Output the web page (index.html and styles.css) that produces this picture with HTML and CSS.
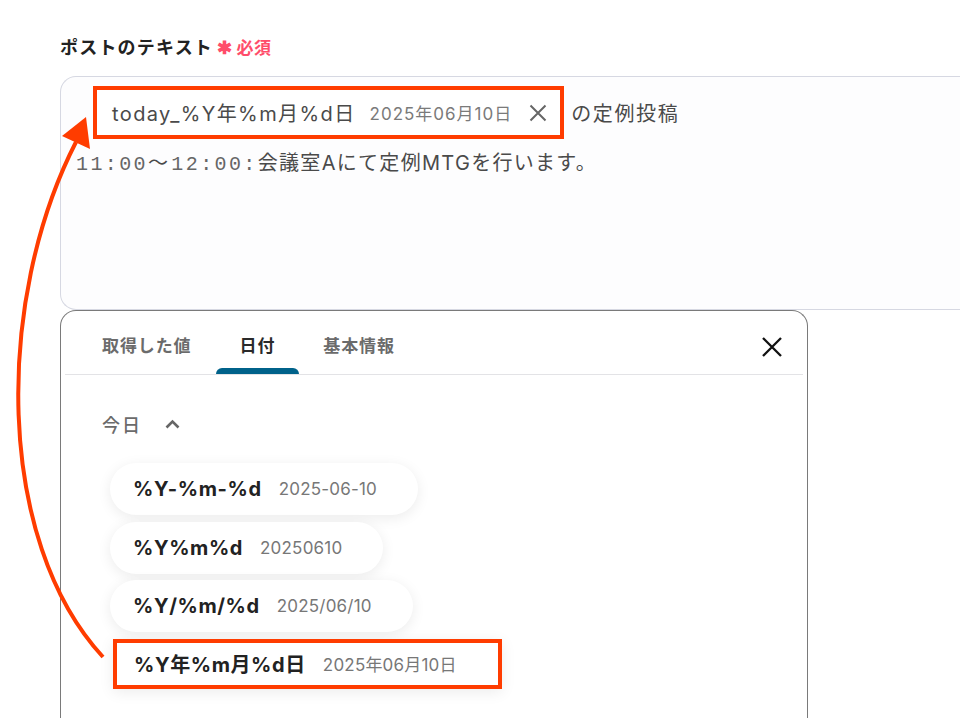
FILE: index.html
```html
<!DOCTYPE html>
<html lang="ja">
<head>
<meta charset="utf-8">
<link rel="stylesheet" href="styles.css">
</head>
<body>
<div class="page">
  <div class="label">ポストのテキスト<span class="req"><span class="ast">✱</span>必須</span></div>
  <div class="field">
    <div class="line1">
      <span class="chip">
        <span class="chip-key">today_%Y年%m月%d日</span>
        <span class="chip-val">2025年06月10日</span>
        <svg class="chip-x" width="18" height="18" viewBox="0 0 18 18"><path d="M1.5 1.5 L16.5 16.5 M16.5 1.5 L1.5 16.5" stroke="#666" stroke-width="2" fill="none"/></svg>
      </span>
      <span class="after">の定例投稿</span>
    </div>
    <div class="line2"><span class="mono">11:00</span><span class="wave">〜</span><span class="mono">12:00:</span>会議室Aにて定例MTGを行います。</div>
  </div>
  <div class="popup">
    <div class="tabs">
      <div class="tab">取得した値</div>
      <div class="tab active">日付</div>
      <div class="tab">基本情報</div>
      <svg class="close" width="22" height="22" viewBox="0 0 22 22"><path d="M2 2 L20 20 M20 2 L2 20" stroke="#111" stroke-width="2.3" fill="none"/></svg>
    </div>
    <div class="section-head">今日<svg class="chev" width="15" height="10" viewBox="0 0 15 10"><path d="M1.5 8.5 L7.5 2.5 L13.5 8.5" stroke="#666" stroke-width="2.6" fill="none"/></svg></div>
    <div class="items">
      <div class="item"><span class="key">%Y-%m-%d</span><span class="val">2025-06-10</span></div>
      <div class="item"><span class="key">%Y%m%d</span><span class="val">20250610</span></div>
      <div class="item"><span class="key">%Y/%m/%d</span><span class="val">2025/06/10</span></div>
      <div class="item marked"><span class="key">%Y年%m月%d日</span><span class="val">2025年06月10日</span></div>
    </div>
  </div>
  <svg class="arrow" width="960" height="718" viewBox="0 0 960 718">
    <path d="M103 657 C -5 540 -5 300 76 142" stroke="#ff3c00" stroke-width="4" fill="none"/>
    <polygon points="86,117 62,136 90,149" fill="#ff3c00"/>
  </svg>
</div>
</body>
</html>
```
FILE: styles.css
```css
* { box-sizing: border-box; }
html, body { margin: 0; padding: 0; }
body {
  width: 960px;
  height: 718px;
  overflow: hidden;
  background: #ffffff;
  font-family: "Inter", "Noto Sans CJK JP", sans-serif;
  color: #333;
}
.page {
  position: relative;
  height: 718px;
  padding: 36px 0 0 60px;
}
.label {
  font-size: 18px;
  line-height: 24px;
  font-weight: 700;
  color: #222;
  letter-spacing: 1.2px;
  display: flex;
  align-items: center;
}
.req {
  color: #ff4d6a;
  font-size: 17px;
  font-weight: 700;
  margin-left: 4px;
  display: flex;
  align-items: center;
  letter-spacing: 0.5px;
}
.ast { font-size: 18px; margin-right: 4px; }
.field {
  margin-top: 16px;
  width: 930px;
  height: 234px;
  border: 1px solid #d6d8e2;
  border-right: none;
  border-radius: 16px 0 0 16px;
  background: #fdfdfe;
  padding: 9px 0 0 15px;
}
.line1 { display: flex; align-items: center; }
.chip {
  display: inline-flex;
  align-items: center;
  height: 53px;
  margin-left: 17px;
  border: 4px solid #ff3c00;
  background: #fff;
  padding: 0 13px 0 15px;
}
.chip-key {
  font-size: 20px;
  letter-spacing: 1.4px;
  color: #4a4a4a;
}
.chip-val {
  font-size: 17px;
  color: #7a7a7a;
  margin-left: 14px;
  letter-spacing: 1px;
}
.chip-x { margin-left: 17px; }
.after {
  margin-left: 7px;
  font-size: 20px;
  letter-spacing: 1.6px;
  color: #4a4a4a;
}
.line2 {
  margin-top: 10px;
  font-size: 20px;
  line-height: 28px;
  letter-spacing: 1.3px;
  color: #4a4a4a;
}
.mono {
  font-family: "Liberation Mono", monospace;
  font-weight: 400;
  letter-spacing: 2.4px;
  color: #666;
}
.wave { margin-right: 2px; }
.popup {
  width: 748px;
  height: 420px;
  border: 1px solid #7a7a7a;
  border-bottom: none;
  border-radius: 16px 16px 0 0;
  background: #fff;
}
.tabs {
  display: flex;
  align-items: stretch;
  height: 64px;
  margin: 0 4px;
  padding-left: 13px;
  border-bottom: 1px solid #e3e3e6;
}
.tab {
  position: relative;
  display: flex;
  align-items: center;
  padding: 3px 24px 0;
  font-size: 17px;
  font-weight: 700;
  letter-spacing: 0.9px;
  color: #6b6b6b;
}
.tab.active { color: #2a2a2a; }
.tab.active::after {
  content: "";
  position: absolute;
  left: 0;
  right: 0;
  bottom: 0;
  height: 6px;
  border-radius: 6px 6px 0 0;
  background: #00628a;
}
.close { margin: 25px 20px 0 auto; }
.section-head {
  display: flex;
  align-items: center;
  padding: 39px 0 0 41px;
  height: 63px;
  font-size: 18px;
  line-height: 24px;
  font-weight: 500;
  letter-spacing: 2px;
  color: #6b6b6b;
}
.chev { margin-left: 23px; margin-top: -4px; }
.items {
  display: flex;
  flex-direction: column;
  align-items: flex-start;
  gap: 6.5px;
  margin-top: 25px;
  padding-left: 49px;
}
.item {
  display: inline-flex;
  align-items: center;
  height: 52px;
  padding: 0 41px 0 23px;
  border-radius: 26px;
  background: #fff;
  box-shadow: 0 3px 14px rgba(0, 0, 0, 0.08);
}
.key {
  font-size: 20px;
  font-weight: 700;
  letter-spacing: 0.6px;
  color: #222;
}
.val {
  margin-left: 17px;
  font-size: 17px;
  letter-spacing: 0.2px;
  color: #777;
}
.item.marked {
  height: 50px;
  margin-left: 3px;
  margin-top: 0;
  border: 4px solid #ff3c00;
  border-radius: 0;
  padding: 0 41px 0 17px;
}
.arrow {
  position: absolute;
  left: 0;
  top: 0;
  pointer-events: none;
}
```
